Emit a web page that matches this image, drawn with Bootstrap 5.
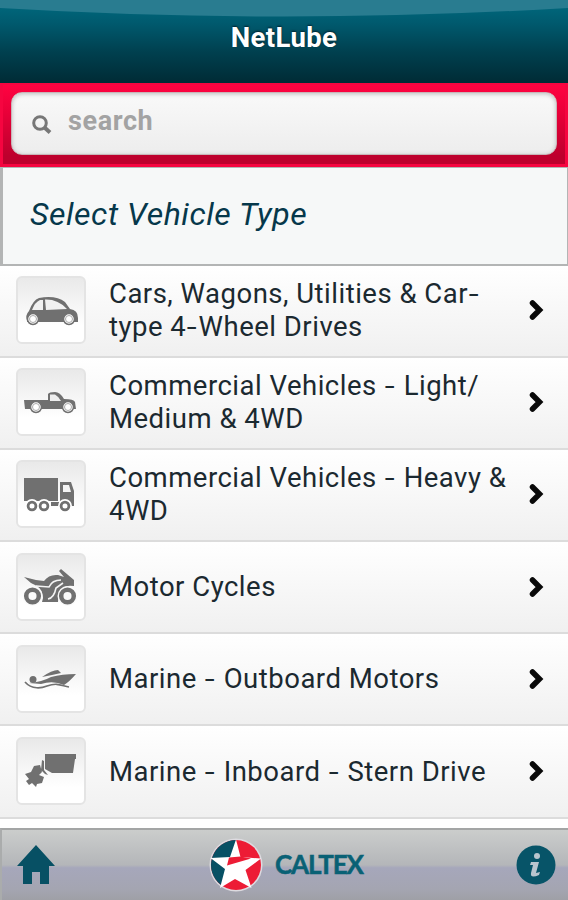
<!DOCTYPE html>
<html lang="en">
<head>
<meta charset="utf-8">
<meta name="viewport" content="width=device-width, initial-scale=1">
<title>NetLube</title>
<link href="https://cdn.jsdelivr.net/npm/bootstrap@5.3.0/dist/css/bootstrap.min.css" rel="stylesheet">
<style>
body{font-family:Roboto,"Liberation Sans",sans-serif;background:#fff;width:568px;height:900px;overflow:hidden}
.top-bar{height:83px;background:linear-gradient(#006b80 0,#00596d 24px,#00404f 52px,#002b35 83px)}
.gloss{left:0;top:0}
.app-title{font-size:27.5px;font-weight:700;line-height:32px;margin-top:22px;text-shadow:0 -1px 2px #00202c;letter-spacing:.4px}
.search-bar{height:84px;padding:7px 8px 9px 8px;background:linear-gradient(#ff0341,#e90039 35%,#bd002d 90%);border:solid #f60540;border-width:2px 3px 3px}
.search-box{height:63px;border-radius:11px;border:1px solid #c9b5b8;background:linear-gradient(#f9f9f9,#ededed);padding:0 0 0 20px;box-shadow:inset 0 1px 4px #bbb}
.search-text{font-size:27px;font-weight:700;color:#a3a3a3;line-height:32px;margin:-6px 0 0 16px;letter-spacing:.6px}
.heading-box{height:98.5px;background:#f6f8f8;border:solid #b3b5b5;border-width:1px 1px 2px 3px;padding:0 0 3px 27px}
.heading-text{font-size:32px;font-style:italic;font-weight:400;color:#06384b;line-height:40px;letter-spacing:.55px}
.vehicle{height:92.2px;background:linear-gradient(#fff,#f0f0f0);border-bottom:2px solid #dcdcdc;padding:0 21px 1px 16px}
.thumb{width:70px;height:68px;border:2px solid #e4e4e4;border-radius:6px;background:linear-gradient(#e9e9e9,#fff 75%)}
.label-text{font-size:27.5px;line-height:33px;color:#1b2930;letter-spacing:.5px;margin-left:23px;white-space:nowrap}
.dash{display:inline-block;padding:0 2.2px 0 2px;transform:scaleX(1.3)}
.foot{height:72px;margin-top:9.3px;background:linear-gradient(#cbcdcc,#b4b6b9 50%,#a6a7bb 54%,#a4a5b1 85%,#9fa0a6);border-top:2px solid #a3a5a5;border-left:2px solid #aaacac;padding:0 12px 0 15px}
</style>
<script src="https://cdn.jsdelivr.net/npm/bootstrap@5.3.0/dist/js/bootstrap.bundle.min.js"></script>
</head>
<body class="d-flex flex-column">
<svg class="d-none"><symbol id="chev" viewBox="0 0 20 22"><path d="M5.500 4l7 7-7 7" fill="none" stroke="#090909" stroke-width="5.500" stroke-linecap="round"/></symbol></svg>
<header class="top-bar position-relative text-center text-white flex-shrink-0 overflow-hidden">
<svg class="gloss position-absolute" width="568" height="20" viewBox="0 0 568 20"><path d="M0 0H568V8Q284 25 0 8Z" fill="#297c90"/></svg>
<h1 class="app-title position-relative mb-0">NetLube</h1>
</header>
<div class="search-bar flex-shrink-0">
<div class="search-box d-flex align-items-center">
<svg width="20" height="20" viewBox="0 0 20 20"><circle cx="8" cy="9" r="6.3" fill="none" stroke="#777" stroke-width="3"/><path d="M12.500 13.500l5.500 5" stroke="#777" stroke-width="4"/></svg>
<span class="search-text">search</span>
</div></div>
<div class="heading-box d-flex align-items-center flex-shrink-0"><h2 class="heading-text mb-0">Select Vehicle Type</h2></div>
<main class="flex-shrink-0">
<div class="vehicle d-flex align-items-center"><span class="thumb flex-shrink-0 d-flex"><svg width="66" height="64" viewBox="0 0 66 64"><path d="M9 43Q7 37 11 33Q15 22 21 20Q38 17 47 24L52 31Q60 32 60 40V44H9Z" fill="#707070"/><path d="M14 32Q17 24 22 22H25V32ZM27 21.500Q40 21 49 31L28 32Z" fill="#f1f1f1"/><g fill="#fff" stroke="#707070" stroke-width="1.500"><circle cx="15" cy="41" r="5.500"/><circle cx="51" cy="41" r="5.500"/></g><g fill="none" stroke="#aaa"><circle cx="15" cy="41" r="3.500"/><circle cx="51" cy="41" r="3.500"/></g></svg></span><span class="label-text">Cars, Wagons, Utilities &amp; Car<span class="dash">-</span><br>type 4<span class="dash">-</span>Wheel Drives</span><svg class="ms-auto" width="20" height="22"><use href="#chev"/></svg></div>
<div class="vehicle d-flex align-items-center"><span class="thumb flex-shrink-0 d-flex"><svg width="66" height="64" viewBox="0 0 66 64"><path d="M6 30H30V24Q31 22 37 22Q42 22 46 29Q56 29 57 32L58 39H7Z" fill="#707070"/><path d="M32 24.500H37Q40 26 43 31H32Z" fill="#eee"/><g fill="#fff" stroke="#707070" stroke-width="1.500"><circle cx="18" cy="37" r="5.500"/><circle cx="50" cy="37" r="5.500"/></g><g fill="none" stroke="#aaa"><circle cx="18" cy="37" r="3.500"/><circle cx="50" cy="37" r="3.500"/></g></svg></span><span class="label-text">Commercial Vehicles <span class="dash">-</span> Light/<br>Medium &amp; 4WD</span><svg class="ms-auto" width="20" height="22"><use href="#chev"/></svg></div>
<div class="vehicle d-flex align-items-center"><span class="thumb flex-shrink-0 d-flex"><svg width="66" height="64" viewBox="0 0 66 64"><path d="M6 16H40V39H6ZM42 20H53L56 29V44H42Z" fill="#707070"/><path d="M45 23H51L53 30H45Z" fill="#f4f4f4"/><path d="M33 40H41V44H33Z" fill="#707070"/><g fill="#fff" stroke="#fff" stroke-width="2"><circle cx="14" cy="44" r="6"/><circle cx="26" cy="44" r="6"/><circle cx="47" cy="44" r="6"/></g><g fill="#fff" stroke="#707070" stroke-width="2.800"><circle cx="14" cy="44" r="3.900"/><circle cx="26" cy="44" r="3.900"/><circle cx="47" cy="44" r="3.900"/></g></svg></span><span class="label-text">Commercial Vehicles <span class="dash">-</span> Heavy &amp;<br>4WD</span><svg class="ms-auto" width="20" height="22"><use href="#chev"/></svg></div>
<div class="vehicle d-flex align-items-center"><span class="thumb flex-shrink-0 d-flex"><svg width="66" height="64" viewBox="0 0 66 64"><path d="M6 22L18 25 26 26Q31 19 40 20L46 22 41 16 43 14 56 25 56 31Q44 29 41 38L40 47H24L25 43Q25 35 19 31L13 28Z" fill="#707070"/><path d="M18 31L31 32Q34 25 43 25M30 44Q36 43 38 33L45 28" fill="none" stroke="#f5f5f5" stroke-width="1.600"/><g fill="#fafafa"><circle cx="14.500" cy="41" r="10"/><circle cx="49.500" cy="41" r="10"/></g><g fill="#fafafa" stroke="#707070" stroke-width="4.500"><circle cx="14.500" cy="41" r="6.300"/><circle cx="49.500" cy="41" r="6.300"/></g></svg></span><span class="label-text">Motor Cycles</span><svg class="ms-auto" width="20" height="22"><use href="#chev"/></svg></div>
<div class="vehicle d-flex align-items-center"><span class="thumb flex-shrink-0 d-flex"><svg width="66" height="64" viewBox="0 0 66 64" fill="#707070"><circle cx="15" cy="32.500" r="3.500"/><path d="M11 36Q24 35 33 30 44 27 58 27 51 35 46 38 35 33 23 37Z"/><path d="M24 30Q34 23 40 23L43 26 34 28Z"/><path d="M7 35C14 43 24 41 29 39 40 35 44 39 51 40" fill="none" stroke="#707070" stroke-width="1.700"/></svg></span><span class="label-text">Marine <span class="dash">-</span> Outboard Motors</span><svg class="ms-auto" width="20" height="22"><use href="#chev"/></svg></div>
<div class="vehicle d-flex align-items-center"><span class="thumb flex-shrink-0 d-flex"><svg width="66" height="64" viewBox="0 0 66 64" fill="#707070"><path d="M27 15H58V20H57L55 34H34L27 30ZM24 21L26 22V31L30 36 27 35 23 31ZM16 27L22 26 24 33 21 36 26 38 24 44 19 45 18 48 14 44 11 46 8 42 11 40 7 35 13 33Z"/></svg></span><span class="label-text">Marine <span class="dash">-</span> Inboard <span class="dash">-</span> Stern Drive</span><svg class="ms-auto" width="20" height="22"><use href="#chev"/></svg></div>
</main>
<footer class="foot d-flex align-items-center justify-content-between flex-shrink-0">
<svg width="40" height="40" viewBox="0 0 40 40"><path d="M19 0L38 21H32V39H23V27H15V39H6V21H0Z" fill="#075064"/></svg>
<svg width="160" height="56" viewBox="0 0 160 56"><circle cx="29" cy="28" r="26.500" fill="#dddbe0"/><circle cx="29" cy="28" r="25" fill="#ed1c35"/><path d="M29 3A25 25 0 0 0 14 48L29 28Z" fill="#075064"/><path d="M29 2.500L33.500 20 54 21.500 38.500 33 44.500 51 28 42 13 51 18 32 3.500 21 23 20Z" fill="#fff"/><path d="M22 20.500L33.500 19.500 44 21.500 20 28.500Z" fill="#ed1c35"/><text x="68" y="37" textLength="89" font-family="Lato" font-weight="700" font-size="26" fill="#096175" stroke="#096175" stroke-width=".5">CALTEX</text></svg>
<svg width="40" height="40" viewBox="0 0 40 40"><circle cx="20" cy="20" r="19.500" fill="#075468"/><circle cx="21" cy="11" r="3" fill="#b9c5ce"/><path d="M15 17H23L20 28 24 27 23 30Q14 34 15 28L17 20H14Z" fill="#b9c5ce"/></svg>
</footer>
</body>
</html>
